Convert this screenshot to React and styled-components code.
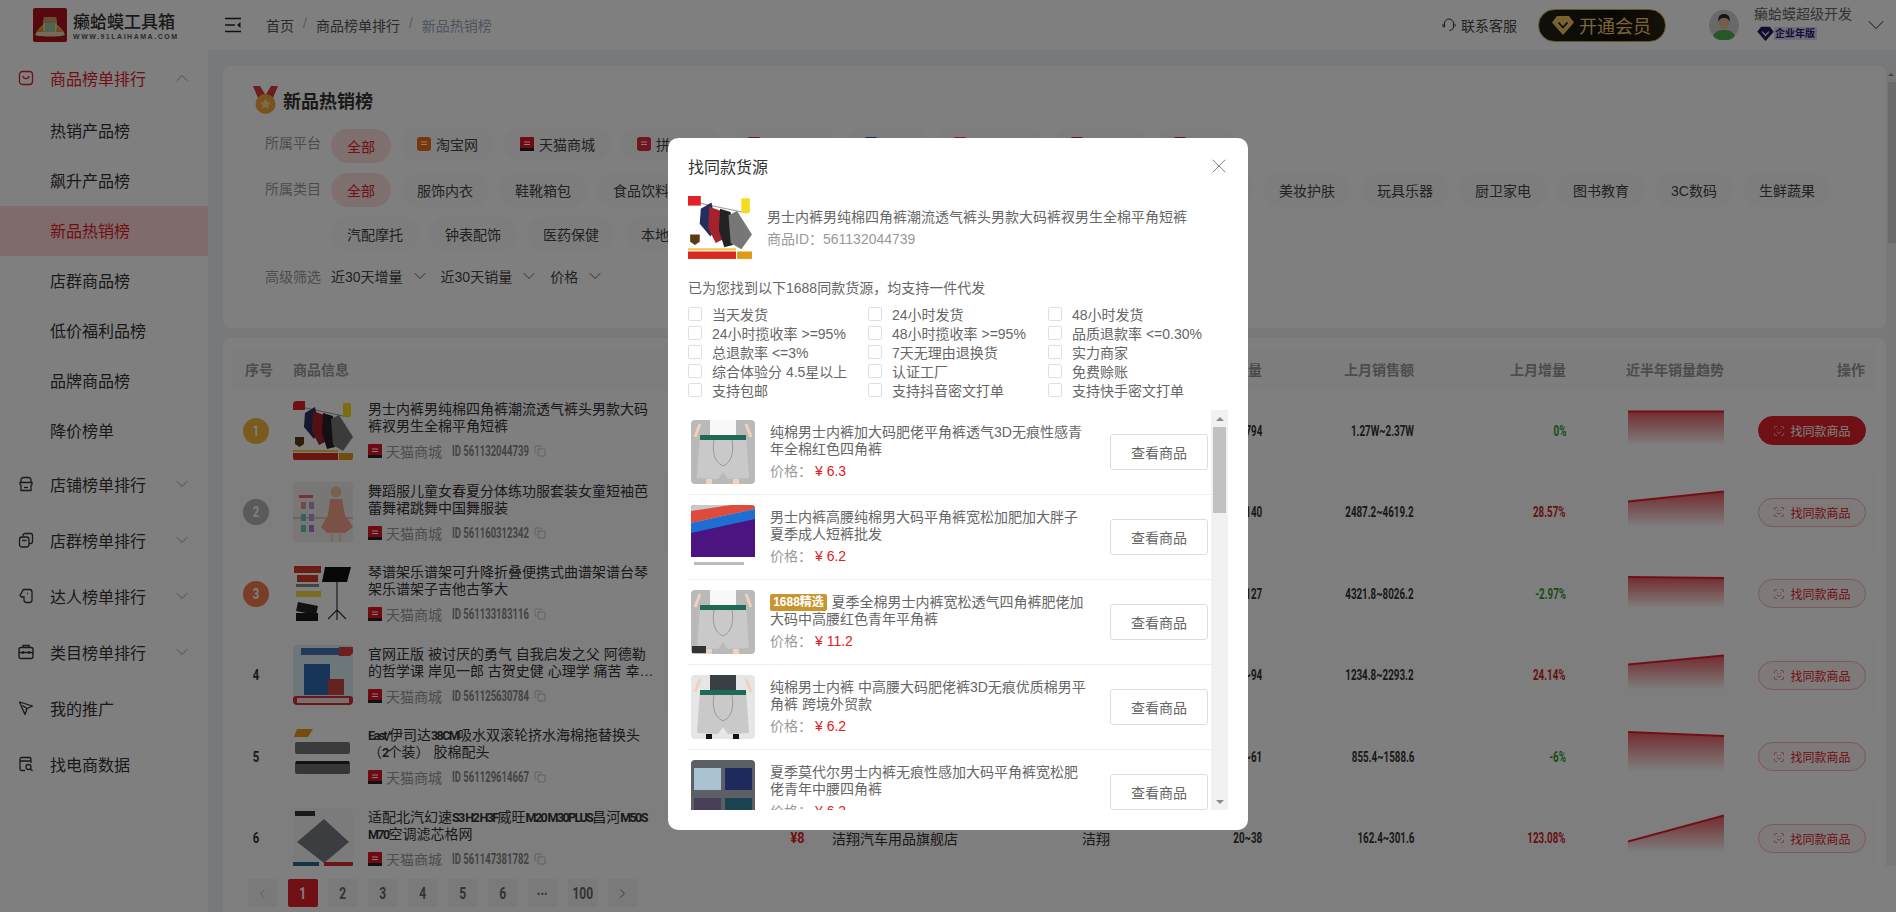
import React from "react";
import styled, { createGlobalStyle } from "styled-components";
import { ChevronDown, ChevronUp, ChevronLeft, ChevronRight, Copy, ScanFace, X } from "lucide-react";

const red = "#e0202a";
const cjk = `"Liberation Sans", "Noto Sans CJK SC", sans-serif`;

const Global = createGlobalStyle`
  html, body { margin: 0; padding: 0; height: 100%; overflow: hidden; }
  body { font-family: ${cjk}; font-size: 14px; color: #333; background: #fff; }
  * { box-sizing: border-box; }
`;

const Page = styled.div`
  width: 100%;
  height: 912px;
  display: flex;
  flex-direction: column;
  overflow: hidden;
`;

/* the table numbers are a condensed face in the original, none is installed */
const Narrow = styled.span`
  display: inline-block;
  font-family: Roboto, sans-serif;
  font-weight: 700;
  white-space: nowrap;
  transform: scaleX(${(p) => p.$x || 0.7});
  transform-origin: ${(p) => p.$origin || "right"} center;
`;
const Thin = styled.span`
  font-family: Roboto, sans-serif;
  font-size: 12.5px;
  font-weight: 700;
  letter-spacing: -1.6px;
`;

/* top bar */
const Header = styled.header`
  flex: 0 0 50px;
  display: flex;
  align-items: center;
  background: #fff;
`;
const Brand = styled.div`
  width: 208px;
  padding-left: 33px;
  display: flex;
  align-items: center;
  gap: 6px;
`;
const BrandText = styled.div`
  display: flex;
  flex-direction: column;
  width: 101px;
`;
const BrandName = styled.span`
  font-size: 17px;
  line-height: 22px;
  font-weight: 500;
  color: #333;
  white-space: nowrap;
  font-family: "Noto Sans CJK SC", sans-serif;
`;
const BrandUrl = styled.span`
  font-size: 7px;
  line-height: 9px;
  font-weight: 700;
  letter-spacing: 1.52px;
  color: #555;
  white-space: nowrap;
`;
const Toggler = styled.span`
  display: flex;
  margin-left: 17px;
  margin-right: 25px;
`;
const Crumbs = styled.nav`
  display: flex;
  gap: 9px;
  flex: 1;
  color: #555;
  margin-top: -1px;
`;
const Crumb = styled.span`
  color: ${(p) => (p.$current ? "#97a8be" : "#555")};
`;
const CrumbSep = styled.span`
  color: #bbb;
`;
const Service = styled.div`
  display: flex;
  align-items: center;
  gap: 5px;
  color: #444;
  margin-right: 21px;
`;
const VipButton = styled.div`
  width: 128px;
  height: 33px;
  border-radius: 17px;
  border: 1px solid #c9a450;
  background: linear-gradient(90deg, #26221a, #120f08 60%, #2b2413);
  display: flex;
  align-items: center;
  gap: 5px;
  padding-left: 13px;
  color: #f2cb74;
  font-size: 18px;
  margin-right: 43px;
`;
const UserBox = styled.div`
  display: flex;
  align-items: center;
  padding-right: 6px;
`;
const UserText = styled.div`
  display: flex;
  flex-direction: column;
  margin-left: 15px;
  margin-right: 10px;
  margin-top: -6px;
`;
const UserName = styled.span`
  color: #666;
  line-height: 20px;
`;
const UserPlan = styled.span`
  display: flex;
  align-items: center;
  margin-left: 3px;
  margin-top: 2px;
`;
const PlanTag = styled.span`
  background: #dcd6f5;
  color: #1d1a6b;
  font-size: 10px;
  line-height: 13px;
  font-weight: 700;
  padding: 0 2px 0 1px;
`;

const Body = styled.div`
  flex: 1;
  display: flex;
  min-height: 0;
`;

/* left menu */
const Sidebar = styled.aside`
  flex: 0 0 208px;
  background: #fff;
`;
const MenuParent = styled.div`
  height: 56px;
  display: flex;
  align-items: center;
  padding: 0 16px 1px 18px;
  font-size: 16px;
  color: ${(p) => (p.$open ? red : "#333")};
`;
const MenuIcon = styled.span`
  display: flex;
  margin-right: 16px;
`;
const MenuLabel = styled.span`
  flex: 1;
`;
const MenuChild = styled.div`
  height: 50px;
  line-height: 50px;
  padding: 1px 0 0 50px;
  font-size: 16px;
  color: ${(p) => (p.$active ? red : "#333")};
  background: ${(p) => (p.$active ? "#ffd6d6" : "transparent")};
`;

const Main = styled.main`
  flex: 1;
  min-width: 0;
  display: flex;
  flex-direction: column;
  background: #f0f2f5;
  padding-top: 16px;
`;
const ScrollArea = styled.div`
  height: ${(p) => p.$h}px;
  flex: none;
  display: flex;
  min-height: 0;
`;
const ScrollContent = styled.div`
  flex: 1;
  min-width: 0;
  overflow: hidden;
  padding-left: ${(p) => p.$left || 0}px;
`;
const Track = styled.div`
  flex: 0 0 ${(p) => p.$w}px;
  display: flex;
  flex-direction: column;
  align-items: flex-end;
  background: #f1f1f1;
`;
const TrackEnd = styled.span`
  flex: 0 0 ${(p) => p.$h}px;
  align-self: stretch;
  display: flex;
  align-items: center;
  justify-content: center;
  margin-top: ${(p) => (p.$last ? "auto" : 0)};
  &::before {
    content: "";
    border-left: ${(p) => p.$size}px solid transparent;
    border-right: ${(p) => p.$size}px solid transparent;
    ${(p) => (p.$last ? "border-top" : "border-bottom")}: ${(p) => p.$size}px solid #8c8c8c;
  }
`;
const TrackThumb = styled.span`
  height: ${(p) => p.$h}px;
  width: ${(p) => p.$w}px;
  margin-right: ${(p) => p.$right || 0}px;
  background: ${(p) => p.$color};
`;
const Card = styled.section`
  background: #fff;
  border-radius: 8px;
`;
const FilterCard = styled(Card)`
  height: 262px;
  padding: 20px 10px 0 30px;
  margin-bottom: 10px;
`;
const TitleRow = styled.div`
  display: flex;
  align-items: center;
  gap: 5px;
  height: 28px;
  margin-bottom: 13px;
`;
const PageTitle = styled.h2`
  margin: 0;
  font-size: 18px;
  font-weight: 700;
  color: #333;
`;
const FilterRow = styled.div`
  display: flex;
  align-items: flex-start;
  margin-bottom: ${(p) => p.$gap}px;
`;
const FilterLabel = styled.span`
  flex: 0 0 66px;
  margin-left: 12px;
  line-height: 32px;
  color: #999;
`;
const Pills = styled.div`
  display: flex;
  flex-wrap: wrap;
  gap: 10px;
  flex: 1;
`;
const Pill = styled.span`
  height: 34px;
  display: inline-flex;
  align-items: center;
  gap: 5px;
  padding: 0 16px;
  border-radius: 17px;
  white-space: nowrap;
  min-width: ${(p) => p.$min || 0}px;
  color: ${(p) => (p.$on ? red : "#444")};
  background: ${(p) => (p.$on ? "#ffe0e0" : "#fbfbfb")};
  margin-top: ${(p) => (p.$drop ? 2 : 0)}px;
`;
const Advanced = styled.div`
  display: flex;
  align-items: center;
  height: 24px;
  margin-left: 12px;
`;
const AdvancedLabel = styled.span`
  width: 66px;
  color: #999;
`;
const Drop = styled.span`
  display: flex;
  align-items: center;
  gap: 7px;
  margin-right: 11px;
  color: #444;
  font-size: 14px;
`;

const TableCard = styled(Card)`
  padding: 10px;
  min-height: 540px;
`;
const grid = `
  display: grid;
  grid-template-columns: 46px 526px 277px 100px 80px 152px 152px 158px 152px;
  align-items: center;
`;
const HeadRow = styled.div`
  ${grid}
  height: 42px;
  background: #fafafa;
  color: #999;
  font-weight: 700;
`;
const Row = styled.div`
  ${grid}
  height: 81.5px;
  background: ${(p) => (p.$even ? "#fcfcfc" : "#fff")};
`;
const HeadFirst = styled.span`
  padding-left: 12px;
  white-space: nowrap;
`;
const HeadProduct = styled.span`
  padding-left: 14px;
`;
const Cell = styled.div`
  text-align: ${(p) => p.$align || "left"};
  padding-left: ${(p) => p.$pad || 0}px;
  padding-right: ${(p) => p.$padRight || 0}px;
  white-space: nowrap;
  color: ${(p) => p.$color || "inherit"};
`;
const RankCell = styled.div`
  display: flex;
  justify-content: center;
`;
const RankBadge = styled.span`
  width: 26px;
  height: 26px;
  border-radius: 50%;
  background: ${(p) => p.$bg};
  color: #fff;
  display: flex;
  align-items: center;
  justify-content: center;
`;
const ProductCell = styled.div`
  display: flex;
  align-items: center;
  padding-left: 14px;
`;
const Thumb = styled.span`
  flex: 0 0 ${(p) => p.$size}px;
  height: ${(p) => p.$size}px;
  border-radius: 4px;
  overflow: hidden;
  display: block;
  margin-left: ${(p) => p.$left || 0}px;
`;
const ProductText = styled.div`
  margin-left: 15px;
  width: 286px;
`;
const ProductTitle = styled.div`
  line-height: 17px;
  height: 34px;
  color: #333;
  overflow: hidden;
  white-space: normal;
  display: -webkit-box;
  -webkit-box-orient: vertical;
  -webkit-line-clamp: 2;
`;
const ProductMeta = styled.div`
  display: flex;
  align-items: center;
  margin-top: 7px;
  height: 18px;
  color: #999;
`;
const Platform = styled.span`
  margin-left: 4px;
  margin-right: 10px;
`;
const ProductId = styled.span`
  flex: 0 0 77px;
  min-width: 0;
  color: #888;
  margin-right: 5px;
`;
const RowPrice = styled.span`
  margin-left: auto;
  color: #e02020;
`;
const ChartCell = styled.div`
  display: flex;
  justify-content: flex-end;
`;
const OpCell = styled.div`
  display: flex;
  justify-content: flex-end;
  padding-right: 10px;
`;
const FindButton = styled.span`
  width: 108px;
  height: 29px;
  border-radius: 15px;
  display: flex;
  align-items: center;
  justify-content: center;
  gap: 5px;
  font-size: 12px;
  color: ${(p) => (p.$solid ? "#fff" : red)};
  background: ${(p) => (p.$solid ? red : "#fff5f5")};
  border: 1px solid ${(p) => (p.$solid ? red : "#f7b0b0")};
`;

const Pager = styled.div`
  flex: 1;
  margin-left: 15px;
  background: #fff;
  padding: 13px 0 0 24.5px;
  display: flex;
  gap: 10px;
`;
const PageBtn = styled.span`
  width: 30px;
  height: 28px;
  border-radius: 2px;
  display: flex;
  align-items: center;
  justify-content: center;
  font-size: 16px;
  color: ${(p) => (p.$on ? "#fff" : p.$off ? "#bbb" : "#666")};
  background: ${(p) => (p.$on ? red : "#f4f4f5")};
`;

/* dialog */
const Overlay = styled.div`
  position: fixed;
  inset: 0;
  background: rgba(0, 0, 0, 0.5);
  padding: 138px 0 0 668px;
`;
const Modal = styled.div`
  width: 580px;
  background: #fff;
  border-radius: 10px;
  padding: 18px 20px 20px;
`;
const ModalHead = styled.div`
  display: flex;
  justify-content: space-between;
  align-items: center;
  height: 20px;
  margin-bottom: 20px;
`;
const ModalTitle = styled.span`
  font-size: 16px;
  color: #333;
`;
const CloseIcon = styled(X)`
  margin-right: -3px;
`;
const SourceBox = styled.div`
  display: flex;
  align-items: center;
  gap: 15px;
`;
const SourceTitle = styled.div`
  line-height: 22px;
  color: #666;
`;
const SourceId = styled.div`
  line-height: 22px;
  color: #999;
`;
const FoundLine = styled.div`
  margin-top: 18px;
  line-height: 20px;
  color: #666;
`;
const Options = styled.div`
  display: grid;
  grid-template-columns: repeat(3, 180px);
  margin-top: 6.5px;
  margin-bottom: 10.5px;
`;
const Option = styled.label`
  display: flex;
  align-items: center;
  height: 19px;
  color: #666;
  white-space: nowrap;
`;
const Check = styled.span`
  width: 14px;
  height: 14px;
  border: 1px solid #dcdfe6;
  border-radius: 2px;
  background: #fff;
  margin-right: 10px;
`;
const SourceRow = styled.div`
  height: 85px;
  display: flex;
  align-items: center;
  padding-bottom: 1px;
  border-bottom: 1px solid #eee;
`;
const SourceText = styled.div`
  width: 320px;
  margin-left: 15px;
`;
const SourceName = styled.div`
  line-height: 17px;
  height: 34px;
  color: #666;
  overflow: hidden;
`;
const SelectTag = styled.span`
  display: inline-block;
  width: 57px;
  height: 17px;
  line-height: 17px;
  text-align: center;
  background: #c8962f;
  color: #fff;
  font-size: 12px;
  font-weight: 700;
  border-radius: 2px;
  margin-right: 4.5px;
  vertical-align: top;
`;
const PriceLine = styled.div`
  margin-top: 5px;
  line-height: 17px;
  color: #999;
`;
const Price = styled.span`
  color: #e02020;
  margin-left: 3px;
`;
const ViewButton = styled.span`
  width: 98px;
  height: 36px;
  margin-left: 20px;
  border: 1px solid #ddd;
  border-radius: 3px;
  display: flex;
  align-items: center;
  justify-content: center;
  color: #666;
`;

/* drawings */
const Svg = ({ w = 16, h = 16, box, children }) => (
  <svg width={w} height={h} viewBox={box || `0 0 ${w} ${h}`} fill="none" style={{ display: "block" }}>
    {children}
  </svg>
);

const Logo = () => (
  <Svg w={34} h={34}>
    <rect width="34" height="34" rx="2" fill="#b0131d" />
    <path d="M2 27c3-6 6-8 8-10l1-8h12l1 8c3 2 6 5 8 10-5 2-25 2-30 0z" fill="#e8d9b0" />
    <path d="M11 9h12l1 6H10z" fill="#c9a36a" />
    <rect x="12" y="15" width="10" height="9" fill="#9cc6a8" />
    <path d="M3 24l7-6 1 6zM31 24l-7-6-1 6z" fill="#d99a2b" />
  </Svg>
);
const ToggleIcon = () => (
  <Svg w={16} h={16}>
    <path d="M0 1.5h16M0 14.5h16M0 8h10" stroke="#222" strokeWidth="1.6" />
    <path d="M12 8l3.5-3v6z" fill="#222" />
  </Svg>
);
const HeadsetIcon = () => (
  <Svg w={14} h={16}>
    <path d="M2.5 10V6.5a4.5 4.5 0 0 1 9 0V10c0 2-1.5 3-4 3.5" stroke="#333" strokeWidth="1" />
    <path d="M2.5 6.5C1 7 .5 8 1 9.5l1.5.5M11.5 6.5c1.5.5 2 1.5 1.5 3" stroke="#333" strokeWidth="1" />
  </Svg>
);
const Diamond = ({ w = 22, h = 20, fill = "#efc65f", mark = "#1c170c" }) => (
  <Svg w={w} h={h} box="0 0 22 20">
    <path d="M5 1h12l5 6.5L11 20 0 7.5z" fill={fill} />
    <path d="M6.5 7.5l4.5 5 4.5-5" stroke={mark} strokeWidth="1.8" />
  </Svg>
);
const Avatar = () => (
  <Svg w={30} h={30}>
    <circle cx="15" cy="15" r="15" fill="#cfd3d6" />
    <path d="M4 26c2-5 6-6 11-6s9 1 11 6a15 15 0 0 1-22 0z" fill="#4caf50" />
    <ellipse cx="15" cy="13" rx="5.2" ry="6.5" fill="#e9bb9b" />
    <path d="M9.5 12c-1-6 2-8 5.500-8s6.500 2 5.500 8c-1-3-2-4-5.500-4s-4.500 1-5.500 4z" fill="#2a2a2a" />
  </Svg>
);
const menuIcons = {
  bag: <><rect x="1.500" y="1.500" width="13" height="13" rx="3" stroke="currentColor" strokeWidth="1.3" /><path d="M5 6c.5 3.500 5.500 3.500 6 0" stroke="currentColor" strokeWidth="1.3" /></>,
  store: <><path d="M3 7V4a2.500 2.500 0 0 1 2.500-2.500h5A2.500 2.500 0 0 1 13 4v3" stroke="currentColor" strokeWidth="1.3" /><path d="M2 6.500h12v1.500a1.500 1.500 0 0 1-1 1.400V14.500H3V9.400A1.500 1.500 0 0 1 2 8z" stroke="currentColor" strokeWidth="1.3" /><path d="M6 11.500h4" stroke="currentColor" strokeWidth="1.3" /></>,
  group: <><rect x="1.500" y="5" width="9.500" height="10" rx="2.500" stroke="currentColor" strokeWidth="1.3" /><path d="M5 4.500V3.500A2 2 0 0 1 7 1.500h5.500a2 2 0 0 1 2 2v6a2 2 0 0 1-2 2H11" stroke="currentColor" strokeWidth="1.3" /><path d="M4 8.500h4.500" stroke="currentColor" strokeWidth="1.3" /></>,
  talent: <path d="M5.500 1.500h6a2.500 2.500 0 0 1 2.500 2.500v8a2.500 2.500 0 0 1-2.500 2.500h-3A2.500 2.500 0 0 1 6 12V9H3.500L2 7.500zM9 5.500h1" stroke="currentColor" strokeWidth="1.3" />,
  brief: <><rect x="1" y="3.500" width="14" height="11" rx="2" stroke="currentColor" strokeWidth="1.400" /><path d="M5 3.500V1.500h6v2M1 8.500h14M5 7v3M11 7v3" stroke="currentColor" strokeWidth="1.400" /></>,
  send: <path d="M1.500 2l13 4-5.500 2.500L7 14.500zM9 8.500L4.500 5.500" stroke="currentColor" strokeWidth="1.300" strokeLinejoin="round" />,
  search: <><path d="M7 14.500H3.500A1.500 1.500 0 0 1 2 13V3a1.500 1.500 0 0 1 1.500-1.500h8A1.500 1.500 0 0 1 13 3v4M2 5h11" stroke="currentColor" strokeWidth="1.300" /><circle cx="10.500" cy="11" r="2.500" stroke="currentColor" strokeWidth="1.300" /><path d="M12.500 13l2 2" stroke="currentColor" strokeWidth="1.300" /></>,
};
const Medal = () => (
  <Svg w={25} h={28}>
    <path d="M0 0h7l5.500 9L18 0h7l-5 12H5z" fill="#d83a3f" />
    <circle cx="12.500" cy="18" r="10" fill="#f0a63c" />
    <path d="M12.500 12.500l1.700 3.500 3.800.500-2.800 2.600.700 3.800-3.400-1.900-3.400 1.900.700-3.800L7 16.500l3.800-.500z" fill="#ffd98a" />
  </Svg>
);
const PlatformIcon = ({ color, foot }) => (
  <Svg w={14} h={14}>
    <rect width="14" height="14" rx={foot ? 1 : 3} fill={color} />
    {foot ? <rect y="11" width="14" height="3" fill="#222" /> : null}
    <path d="M4 5h6M4 7.500h6" stroke="#fff" strokeWidth="1" />
  </Svg>
);

const Hanging = ({ size }) => (
  <Svg w={size} h={size} box="0 0 60 60">
    <rect width="60" height="60" fill="#fff" />
    <path d="M8 6L55 16" stroke="#999" strokeWidth="1" />
    <path d="M12 12L22 6l5 24-6 8-10-12z" fill="#22305f" />
    <path d="M20 10l11 4 3 26-8 4-7-14z" fill="#a5212b" />
    <path d="M30 12l10 3 2 31-8 2-5-16z" fill="#222" />
    <path d="M38 18l8-4 14 22-10 14-10-6z" fill="#777" />
    <rect x="0" y="0" width="12" height="9" fill="#e02127" />
    <rect x="50" y="2" width="8" height="14" rx="1" fill="#f5dc1e" />
    <path d="M2 36h9v7l-4.500 3L2 43z" fill="#5b3a14" />
    <rect x="0" y="49" width="45" height="2" fill="#f2c84b" />
    <rect x="0" y="52" width="45" height="7" fill="#d92a20" />
    <rect x="46" y="52" width="14" height="7" fill="#e09a18" />
  </Svg>
);
const Dance = ({ size }) => (
  <Svg w={size} h={size} box="0 0 60 60">
    <rect width="60" height="60" fill="#f1eeec" />
    <rect x="0" y="35" width="60" height="2" fill="#e3c9a4" />
    <circle cx="43" cy="10" r="5.500" fill="#eec29f" />
    <path d="M37 17h12l3 16 8 12-8 6H34l-6-6 7-12z" fill="#f4a08f" />
    <path d="M39 50v10M47 50v10" stroke="#f0d3bf" strokeWidth="2.500" />
    <rect x="6" y="13" width="14" height="3" fill="#e7657f" />
    <rect x="8" y="20" width="5" height="7" fill="#ec8a9d" />
    <rect x="16" y="20" width="5" height="7" fill="#b598d8" />
    <rect x="8" y="32" width="5" height="7" fill="#68c0c0" />
    <rect x="16" y="32" width="5" height="7" fill="#b598d8" />
    <rect x="8" y="43" width="5" height="7" fill="#68c0c0" />
    <rect x="16" y="43" width="5" height="7" fill="#a77fd2" />
  </Svg>
);
const Stand = ({ size }) => (
  <Svg w={size} h={size} box="0 0 60 60">
    <rect width="60" height="60" fill="#fff" />
    <rect x="1" y="2" width="27" height="7" fill="#d4392e" />
    <rect x="4" y="11" width="21" height="7" fill="#d4392e" />
    <rect x="3" y="20" width="23" height="3" fill="#888" />
    <rect x="3" y="27" width="25" height="6" fill="#f2d94b" />
    <path d="M32 3h26l-4 15H29z" fill="#111" />
    <path d="M44 18v38M44 46l-9 9M44 46l9 9" stroke="#333" strokeWidth="1.200" />
    <path d="M5 38l20 4-2 9-20-4z" fill="#222" />
    <path d="M3 49h22v8H3z" fill="#1a1a1a" />
  </Svg>
);
const Book = ({ size }) => (
  <Svg w={size} h={size} box="0 0 60 60">
    <rect width="60" height="60" fill="#d9ecf7" />
    <rect x="8" y="3" width="38" height="7" fill="#4473b0" />
    <path d="M46 2h14v6l-3 3H46z" fill="#e03a3a" />
    <rect x="11" y="19" width="26" height="31" fill="#2d6bb0" />
    <rect x="35" y="34" width="16" height="16" fill="#c9463f" />
    <rect x="0" y="51" width="60" height="9" rx="3" fill="#cf3030" />
    <rect x="4" y="53" width="52" height="5" fill="#f5dcdc" />
  </Svg>
);
const Mop = ({ size }) => (
  <Svg w={size} h={size} box="0 0 60 60">
    <rect width="60" height="60" fill="#fff" />
    <path d="M4 2h16l-5 8H1z" fill="#e79a12" />
    <rect x="2" y="15" width="55" height="12" rx="2" fill="#777" />
    <rect x="2" y="34" width="55" height="13" rx="2" fill="#6d6d6d" />
    <rect x="3" y="34" width="53" height="3" fill="#222" />
  </Svg>
);
const Filter = ({ size }) => (
  <Svg w={size} h={size} box="0 0 60 60">
    <rect width="60" height="60" fill="#f7f7f7" />
    <rect x="2" y="3" width="20" height="5" fill="#333" />
    <path d="M31 11l25 23-25 21L4 34z" fill="#777b80" />
    <rect x="0" y="54" width="26" height="6" fill="#2a6d8e" />
    <rect x="31" y="54" width="29" height="6" fill="#d92a2a" />
  </Svg>
);
const Shorts = ({ bg = "#b9b9b9", top = "#f8f8f8", legs = "#f0d2bc", tag }) => (
  <Svg w={64} h={64}>
    <rect width="64" height="64" fill={bg} />
    <rect x="19" y="0" width="26" height="16" fill={top} />
    <path d="M9 15h46l3 43-21 1-5-7-5 7-21-1z" fill="#c9c9c9" />
    <rect x="9" y="15" width="46" height="5" fill="#1f6a56" />
    <path d="M23 20c-2 12 0 22 9 26 9-4 11-14 9-26" stroke="#999" strokeWidth="1" />
    <path d="M18 59v5M45 59v5" stroke={legs} strokeWidth="6" />
    <path d="M4 17l5-13M60 17l-5-13" stroke="#f0d2bc" strokeWidth="3" />
    {tag ? <rect x="1" y="56" width="14" height="7" fill="#333" /> : null}
  </Svg>
);
const Colors = () => (
  <Svg w={64} h={64}>
    <rect width="64" height="64" fill="#fff" />
    <rect width="64" height="52" fill="#4b1480" />
    <path d="M0 0h64v10L0 22z" fill="#c9c9c9" />
    <path d="M0 6L40 0h24v4L0 18z" fill="#e04a3a" />
    <path d="M0 18l64-14v10L0 28z" fill="#1f6fd2" />
    <rect x="3" y="57" width="50" height="3" fill="#bbb" />
  </Svg>
);
const Grid4 = () => (
  <Svg w={64} h={64}>
    <rect width="64" height="64" fill="#5c6066" />
    <rect x="3" y="8" width="27" height="22" fill="#a9c2cf" />
    <rect x="34" y="8" width="27" height="22" fill="#1e2a5c" />
    <rect x="3" y="38" width="27" height="26" fill="#4a3f58" />
    <rect x="34" y="38" width="27" height="26" fill="#1c4450" />
  </Svg>
);

const Trend = ({ from, to, index }) => (
  <svg width="96" height="60" viewBox="0 0 96 60" style={{ display: "block" }}>
    <defs>
      <linearGradient id={`trend${index}`} x1="0" y1="0" x2="0" y2="1">
        <stop offset="0" stopColor={red} stopOpacity="0.75" />
        <stop offset="1" stopColor={red} stopOpacity="0" />
      </linearGradient>
    </defs>
    <path d={`M0 ${from}L96 ${to}V44.500H0z`} fill={`url(#trend${index})`} />
    <path d={`M0 ${from}L96 ${to}`} stroke={red} strokeWidth="2" />
  </svg>
);

const menuAfter = [
  ["store", "店铺榜单排行", true],
  ["group", "店群榜单排行", true],
  ["talent", "达人榜单排行", true],
  ["brief", "类目榜单排行", true],
  ["send", "我的推广", false],
  ["search", "找电商数据", false],
];
const subMenu = ["热销产品榜", "飙升产品榜", "新品热销榜", "店群商品榜", "低价福利品榜", "品牌商品榜", "降价榜单"];

const platforms = [
  ["淘宝网", "#f36c16", false, 0],
  ["天猫商城", "#e01222", true, 0],
  ["拼多多", "#e02e3c", false, 100],
  ["京东商城", "#d8322a", false, 0],
  ["苏宁", "#1d5fb8", false, 0],
  ["考拉海购", "#d8452a", false, 0],
  ["唯品会", "#d3243c", false, 0],
  ["快手", "#d3243c", false, 0],
];
const categories = [
  ["服饰内衣"], ["鞋靴箱包"], ["食品饮料"], ["母婴用品"], ["家居日用"], ["家具建材"], ["运动户外"], ["珠宝配饰"], ["宠物", 68],
  ["美妆护肤"], ["玩具乐器"], ["厨卫家电"], ["图书教育"], ["3C数码"], ["生鲜蔬果"], ["汽配摩托"], ["钟表配饰"], ["医药保健"], ["本地生活"],
];

const rows = [
  { art: Hanging, title: "男士内裤男纯棉四角裤潮流透气裤头男款大码裤衩男生全棉平角短裤", id: "561132044739", price: "¥18", shop: "天猫男装旗舰店", brand: "其他", vol: "426~794", sales: "1.27W~2.37W", rise: "0%", color: "#1f9d2a", from: 10.5, to: 10.5 },
  { art: Dance, title: "舞蹈服儿童女春夏分体练功服套装女童短袖芭蕾舞裙跳舞中国舞服装", id: "561160312342", price: "¥33", shop: "艾舞哥旗舰店", brand: "艾舞哥", vol: "75~140", sales: "2487.2~4619.2", rise: "28.57%", color: "#d01c1f", from: 19.5, to: 9.5 },
  { art: Stand, title: "琴谱架乐谱架可升降折叠便携式曲谱架谱台琴架乐谱架子吉他古筝大", id: "561133183116", price: "¥34", shop: "乐器专营店", brand: "其他", vol: "68~127", sales: "4321.8~8026.2", rise: "-2.97%", color: "#1f9d2a", from: 13, to: 14 },
  { art: Book, title: "官网正版 被讨厌的勇气 自我启发之父 阿德勒的哲学课 岸见一郎 古贺史健 心理学 痛苦 幸福 正版图书", id: "561125630784", price: "¥24", shop: "图书专营店", brand: "其他", vol: "51~94", sales: "1234.8~2293.2", rise: "24.14%", color: "#d01c1f", from: 19.5, to: 10.5 },
  { art: Mop, title: <><Thin>East/</Thin>伊司达<Thin>38CM</Thin>吸水双滚轮挤水海棉拖替换头<br />（<Thin>2</Thin>个装） 胶棉配头</>, id: "561129614667", price: "¥26", shop: "伊司达旗舰店", brand: "East", vol: "33~61", sales: "855.4~1588.6", rise: "-6%", color: "#1f9d2a", from: 5, to: 9 },
  { art: Filter, title: <>适配北汽幻速<Thin>S3 H2 H3F</Thin>威旺<Thin>M20 M30PLUS</Thin>昌河<Thin>M50S</Thin><br /><Thin>M70</Thin>空调滤芯格网</>, id: "561147381782", price: "¥8", shop: "洁翔汽车用品旗舰店", brand: "洁翔", vol: "20~38", sales: "162.4~301.6", rise: "123.08%", color: "#d01c1f", from: 33.5, to: 7.5 },
];
const rankColors = ["#f5b53a", "#b5b5b5", "#f47b4f"];

const options = [
  "当天发货", "24小时发货", "48小时发货",
  "24小时揽收率 >=95%", "48小时揽收率 >=95%", "品质退款率 <=0.30%",
  "总退款率 <=3%", "7天无理由退换货", "实力商家",
  "综合体验分 4.5星以上", "认证工厂", "免费赊账",
  "支持包邮", "支持抖音密文打单", "支持快手密文打单",
];
const sources = [
  { art: <Shorts />, name: "纯棉男士内裤加大码肥佬平角裤透气3D无痕性感青年全棉红色四角裤", price: "6.3" },
  { art: <Colors />, name: "男士内裤高腰纯棉男大码平角裤宽松加肥加大胖子夏季成人短裤批发", price: "6.2" },
  { art: <Shorts tag />, name: "夏季全棉男士内裤宽松透气四角裤肥佬加大码中高腰红色青年平角裤", price: "11.2", tag: true },
  { art: <Shorts bg="#e6e6e6" top="#3a3f45" legs="#111" />, name: "纯棉男士内裤 中高腰大码肥佬裤3D无痕优质棉男平角裤 跨境外贸款", price: "6.2" },
  { art: <Grid4 />, name: "夏季莫代尔男士内裤无痕性感加大码平角裤宽松肥佬青年中腰四角裤", price: "6.3" },
];

export default function App() {
  return (
    <Page>
      <Global />
      <Header>
        <Brand>
          <Logo />
          <BrandText>
            <BrandName>癞蛤蟆工具箱</BrandName>
            <BrandUrl>WWW.91LAIHAMA.COM</BrandUrl>
          </BrandText>
        </Brand>
        <Toggler><ToggleIcon /></Toggler>
        <Crumbs>
          <Crumb>首页</Crumb>
          <CrumbSep>/</CrumbSep>
          <Crumb>商品榜单排行</Crumb>
          <CrumbSep>/</CrumbSep>
          <Crumb $current>新品热销榜</Crumb>
        </Crumbs>
        <Service><HeadsetIcon />联系客服</Service>
        <VipButton><Diamond />开通会员</VipButton>
        <UserBox>
          <Avatar />
          <UserText>
            <UserName>癞蛤蟆超级开发</UserName>
            <UserPlan>
              <Diamond w={17} h={15} fill="#1d1a5e" mark="#e6e6ff" />
              <PlanTag>企业年版</PlanTag>
            </UserPlan>
          </UserText>
          <ChevronDown size={28} strokeWidth={0.9} color="#555" />
        </UserBox>
      </Header>

      <Body>
        <Sidebar>
          <MenuParent $open>
            <MenuIcon><Svg>{menuIcons.bag}</Svg></MenuIcon>
            <MenuLabel>商品榜单排行</MenuLabel>
            <ChevronUp size={20} strokeWidth={1} color="#888" />
          </MenuParent>
          {subMenu.map((s) => (
            <MenuChild key={s} $active={s === "新品热销榜"}>{s}</MenuChild>
          ))}
          {menuAfter.map(([icon, label, more]) => (
            <MenuParent key={label}>
              <MenuIcon><Svg>{menuIcons[icon]}</Svg></MenuIcon>
              <MenuLabel>{label}</MenuLabel>
              {more ? <ChevronDown size={20} strokeWidth={1} color="#888" /> : null}
            </MenuParent>
          ))}
        </Sidebar>

        <Main>
          <ScrollArea $h={800}>
            <ScrollContent $left={15}>
              <FilterCard>
                <TitleRow><Medal /><PageTitle>新品热销榜</PageTitle></TitleRow>
                <FilterRow $gap={10}>
                  <FilterLabel>所属平台</FilterLabel>
                  <Pills>
                    <Pill $on $drop>全部</Pill>
                    {platforms.map(([name, color, foot, min]) => (
                      <Pill key={name} $min={min}><PlatformIcon color={color} foot={foot} />{name}</Pill>
                    ))}
                  </Pills>
                </FilterRow>
                <FilterRow $gap={13}>
                  <FilterLabel>所属类目</FilterLabel>
                  <Pills>
                    <Pill $on>全部</Pill>
                    {categories.map(([c, min]) => <Pill key={c} $min={min}>{c}</Pill>)}
                  </Pills>
                </FilterRow>
                <Advanced>
                  <AdvancedLabel>高级筛选</AdvancedLabel>
                  <Drop>近30天增量<ChevronDown size={20} strokeWidth={1} /></Drop>
                  <Drop>近30天销量<ChevronDown size={20} strokeWidth={1} /></Drop>
                  <Drop>价格<ChevronDown size={20} strokeWidth={1} /></Drop>
                </Advanced>
              </FilterCard>

              <TableCard>
                <HeadRow>
                  <HeadFirst>序号</HeadFirst>
                  <HeadProduct>商品信息</HeadProduct>
                  <Cell $pad={27}>店铺名称</Cell>
                  <Cell>品牌</Cell>
                  <Cell $align="right">上月销量</Cell>
                  <Cell $align="right">上月销售额</Cell>
                  <Cell $align="right">上月增量</Cell>
                  <Cell $align="right">近半年销量趋势</Cell>
                  <Cell $align="right" $padRight={11}>操作</Cell>
                </HeadRow>
                {rows.map((r, i) => (
                  <Row key={r.id} $even={i % 2 === 1}>
                    <RankCell>
                      {i < 3
                        ? <RankBadge $bg={rankColors[i]}><Narrow $x={0.8} $origin="center">{i + 1}</Narrow></RankBadge>
                        : <Narrow $x={0.8} $origin="center">{i + 1}</Narrow>}
                    </RankCell>
                    <ProductCell>
                      <Thumb $size={60}><r.art size={60} /></Thumb>
                      <ProductText>
                        <ProductTitle>{r.title}</ProductTitle>
                        <ProductMeta>
                          <PlatformIcon color="#e01222" foot />
                          <Platform>天猫商城</Platform>
                          <ProductId><Narrow $x={0.68} $origin="left">ID {r.id}</Narrow></ProductId>
                          <Copy size={12} strokeWidth={1} color="#888" />
                        </ProductMeta>
                      </ProductText>
                      <RowPrice><Narrow $x={0.9}>{r.price}</Narrow></RowPrice>
                    </ProductCell>
                    <Cell $pad={27}>{r.shop}</Cell>
                    <Cell>{r.brand}</Cell>
                    <Cell $align="right"><Narrow>{r.vol}</Narrow></Cell>
                    <Cell $align="right"><Narrow>{r.sales}</Narrow></Cell>
                    <Cell $align="right" $color={r.color}><Narrow>{r.rise}</Narrow></Cell>
                    <ChartCell><Trend from={r.from} to={r.to} index={i} /></ChartCell>
                    <OpCell>
                      <FindButton $solid={i === 0}><ScanFace size={12} strokeWidth={1.2} />找同款商品</FindButton>
                    </OpCell>
                  </Row>
                ))}
              </TableCard>
            </ScrollContent>
            <Track $w={10}>
              <TrackEnd $h={16} $size={3} />
              <TrackThumb $h={161} $w={8} $color="#d4d4d4" />
            </Track>
          </ScrollArea>
          <Pager>
            <PageBtn $off><ChevronLeft size={15} strokeWidth={1.5} /></PageBtn>
            {["1", "2", "3", "4", "5", "6", "···", "100"].map((p) => (
              <PageBtn key={p} $on={p === "1"}><Narrow $x={0.75} $origin="center">{p}</Narrow></PageBtn>
            ))}
            <PageBtn><ChevronRight size={15} strokeWidth={1.5} /></PageBtn>
          </Pager>
        </Main>
      </Body>

      <Overlay>
        <Modal>
          <ModalHead>
            <ModalTitle>找同款货源</ModalTitle>
            <CloseIcon size={24} strokeWidth={1} color="#888" />
          </ModalHead>
          <SourceBox>
            <Hanging size={64} />
            <div>
              <SourceTitle>男士内裤男纯棉四角裤潮流透气裤头男款大码裤衩男生全棉平角短裤</SourceTitle>
              <SourceId>商品ID：561132044739</SourceId>
            </div>
          </SourceBox>
          <FoundLine>已为您找到以下1688同款货源，均支持一件代发</FoundLine>
          <Options>
            {options.map((o) => (
              <Option key={o}><Check />{o}</Option>
            ))}
          </Options>
          <ScrollArea $h={400}>
            <ScrollContent>
              {sources.map((s) => (
                <SourceRow key={s.name}>
                  <Thumb $size={64} $left={3}>{s.art}</Thumb>
                  <SourceText>
                    <SourceName>
                      {s.tag ? <SelectTag>1688精选</SelectTag> : null}
                      {s.name}
                    </SourceName>
                    <PriceLine>价格：<Price>¥ {s.price}</Price></PriceLine>
                  </SourceText>
                  <ViewButton>查看商品</ViewButton>
                </SourceRow>
              ))}
            </ScrollContent>
            <Track $w={17}>
              <TrackEnd $h={17} $size={4} />
              <TrackThumb $h={86} $w={13} $right={2} $color="#c1c1c1" />
              <TrackEnd $h={17} $size={4} $last />
            </Track>
          </ScrollArea>
        </Modal>
      </Overlay>
    </Page>
  );
}
